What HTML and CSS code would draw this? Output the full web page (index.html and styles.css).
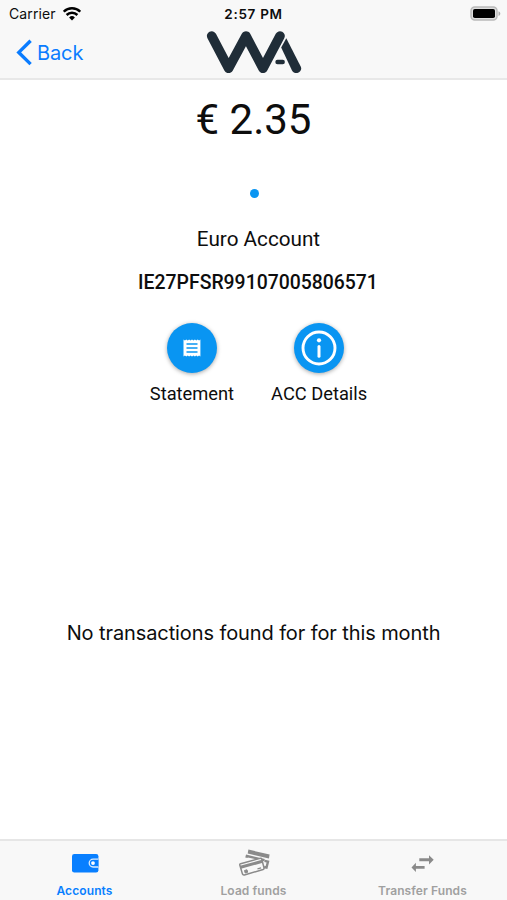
FILE: index.html
```html
<!DOCTYPE html>
<html lang="en">
<head>
  <meta charset="UTF-8">
  <meta name="viewport" content="width=device-width, initial-scale=1">
  <title>Euro Account</title>
  <link rel="stylesheet" href="styles.css">
</head>
<body>

  <header class="header">
    <div class="status-bar">
      <div class="carrier">
        <span>Carrier</span>
        <svg width="18" height="14" viewBox="0 0 18 14" fill="none" stroke="#000" stroke-width="2.5">
          <path d="M.7 4.7a11.8 11.8 0 0 1 16.6 0"/>
          <path d="M3.6 8a7.7 7.7 0 0 1 10.8 0"/>
          <path d="M9 13.5l-2.9-3.1a4.2 4.2 0 0 1 5.8 0z" fill="#000" stroke="none"/>
        </svg>
      </div>
      <div class="time">2:57 PM</div>
      <svg class="battery" width="31" height="16" viewBox="0 0 31 16">
        <rect x="1" y="1" width="26" height="13" rx="3.8" fill="#dedede" stroke="#b9b9b9" stroke-width="1.5"/>
        <rect x="3" y="3" width="22" height="9" rx="1.8" fill="#000"/>
        <path d="M28.5 5.2c2.4 1 2.4 3.7 0 4.7z" fill="#aaa"/>
      </svg>
    </div>
    <nav class="navbar">
      <a class="back">
        <svg width="17" height="27" viewBox="0 0 17 27" fill="none" stroke="#0a7cff" stroke-width="3.4">
          <path d="M14.6 1.7L2.8 13.4l11.8 11.7"/>
        </svg>
        <span>Back</span>
      </a>
      <svg class="logo" width="96" height="44" viewBox="0 0 96 44" fill="none" stroke="#202d38" stroke-width="9.6" stroke-linecap="round" stroke-linejoin="round">
        <path d="M5.7 5L22.6 37.3 40 5 57 37.3 74 5"/>
        <path d="M75.2 16.6L80.3 7.2 94.7 35.4c2.6 5.4-5.6 9.4-8.7 4z" fill="#202d38" stroke="none"/>
        <path d="M71.5 31h5.2" stroke-width="4.4"/>
      </svg>
    </nav>
  </header>

  <main class="content">
    <h1 class="balance">€ 2.35</h1>
    <div class="dot"></div>
    <p class="account-name">Euro Account</p>
    <p class="iban">IE27PFSR99107005806571</p>

    <div class="actions">
      <div class="action">
        <div class="circle">
          <svg width="18" height="18" viewBox="0 0 18 18">
            <path fill="#fff" d="M.5.5l1.4 1 1.4-1 1.4 1 1.4-1 1.4 1 1.5-1 1.5 1 1.4-1 1.4 1 1.4-1 1.4 1 1.3-1v17l-1.3-1-1.4 1-1.4-1-1.4 1-1.4-1-1.5 1-1.5-1-1.4 1-1.4-1-1.4 1-1.4-1-1.4 1z"/>
            <path stroke="#0995f2" stroke-width="1.6" d="M3.5 5h11M3.5 9h11M3.5 13h11"/>
          </svg>
        </div>
        <span>Statement</span>
      </div>
      <div class="action">
        <div class="circle">
          <svg width="36" height="36" viewBox="0 0 36 36">
            <circle cx="18" cy="18" r="16" fill="none" stroke="#fff" stroke-width="2.9"/>
            <circle cx="18" cy="10.3" r="2.1" fill="#fff"/>
            <path d="M18 16.5v9.8" stroke="#fff" stroke-width="3" stroke-linecap="round"/>
          </svg>
        </div>
        <span>ACC Details</span>
      </div>
    </div>

    <p class="empty">No transactions found for for this month</p>
  </main>

  <footer class="tabs">
    <a class="tab active">
      <svg width="34" height="32" viewBox="0 0 34 32">
        <rect x="4" y="6" width="26.4" height="18.6" rx="2.3" fill="#087fff"/>
        <path d="M30.4 11.2h-5.3a3.9 3.9 0 0 0 0 7.8h5.3" fill="#087fff" stroke="#d9ecff" stroke-width="1.3"/>
        <circle cx="25" cy="15.1" r="1.9" fill="#fff"/>
      </svg>
      <span>Accounts</span>
    </a>
    <a class="tab">
      <svg width="34" height="32" viewBox="0 0 34 32">
        <path d="M11.4 1.6l21.2 4.9-.7 4-21.2-4.9z" fill="#8a8a8a"/>
        <path d="M9.4 9.8l.5-1.8 17.6 4.1M27.6 12.9l3.4.8-1.5 5.9-2.4-.6" fill="none" stroke="#8a8a8a" stroke-width="2.4"/>
        <path d="M3.6 15.7L23.2 10.4q1.2-.3 1.6.9l2.2 8.6q.3 1.2-.9 1.6L7.4 27q-1.5.3-1.9-.9L2.8 17q-.2-1 .8-1.3z" fill="#f8f8f8" stroke="#8a8a8a" stroke-width="1.5"/>
        <path d="M3.5 19.2l22-5.9" stroke="#8a8a8a" stroke-width="3"/>
        <path d="M7.5 22.5l2.5-.7.7 2.5-2.5.7z" fill="#8a8a8a" stroke="#8a8a8a"/>
        <path d="M20.5 20.8l3.6-1" stroke="#8a8a8a" stroke-width="1.2"/>
      </svg>
      <span>Load funds</span>
    </a>
    <a class="tab">
      <svg width="34" height="32" viewBox="0 0 34 32" fill="#8a8a8a">
        <path d="M13.3 10.3h9.7V7.2l4.7 4.6-4.7 4.6v-3.2h-9.7z"/>
        <path d="M18.6 17.9h-8.7v-3.1l-4.4 4.6 4.4 4.6v-3.2h8.7z"/>
      </svg>
      <span>Transfer Funds</span>
    </a>
  </footer>

</body>
</html>
```

FILE: styles.css
```css
* {
  box-sizing: border-box;
}
body {
  margin: 0;
  height: 900px;
  display: flex;
  flex-direction: column;
  background: #fff;
  color: #0d0d0d;
  font-family: Roboto, sans-serif;
  overflow: hidden;
}
h1, p {
  margin: 0;
}
svg {
  display: block;
}

.header {
  height: 80px;
  background: #f8f8f8;
  border-bottom: 2px solid #e8e8e8;
  font-family: Inter, sans-serif;
}
.status-bar {
  height: 27px;
  padding: 0 6px 0 9px;
  display: grid;
  grid-template-columns: 1fr auto 1fr;
  align-items: center;
  font-size: 14px;
}
.carrier {
  display: flex;
  align-items: center;
  gap: 7px;
  letter-spacing: 0.1px;
}
.time {
  padding-right: 3px;
  font-weight: 600;
  font-size: 13.5px;
  letter-spacing: 0.7px;
}
.battery {
  justify-self: end;
}
.navbar {
  height: 51px;
  display: grid;
  grid-template-columns: 1fr auto 1fr;
  align-items: center;
  padding: 0 16px;
}
.back {
  display: flex;
  align-items: center;
  gap: 4px;
  color: #0a7cff;
  font-size: 20px;
  letter-spacing: -0.1px;
}

.content {
  flex: 1;
  display: flex;
  flex-direction: column;
  align-items: center;
}
.balance {
  margin-top: 15px;
  font-size: 42px;
  line-height: 50px;
  font-weight: 400;
}
.dot {
  width: 9px;
  height: 9px;
  margin: 44px 0 0 2px;
  border-radius: 50%;
  background: #0995f2;
}
.account-name {
  margin-top: 29px;
  padding-left: 10px;
  font-size: 20.7px;
  line-height: 24px;
}
.iban {
  margin-top: 20px;
  padding-left: 9px;
  font-size: 19.4px;
  line-height: 24px;
  font-weight: 500;
}
.actions {
  display: flex;
  gap: 37px;
  margin-top: 28px;
  padding-left: 10px;
}
.action {
  display: flex;
  flex-direction: column;
  align-items: center;
  gap: 10px;
  font-size: 18.3px;
  line-height: 22px;
}
.circle {
  width: 50px;
  height: 50px;
  display: flex;
  align-items: center;
  justify-content: center;
  border-radius: 50%;
  background: #0995f2;
  box-shadow: 0 1px 4px rgba(0, 0, 0, 0.35);
}
.empty {
  margin-top: 216px;
  font-family: Inter, sans-serif;
  font-size: 20px;
  line-height: 24px;
  letter-spacing: -0.1px;
}

.tabs {
  height: 61px;
  display: grid;
  grid-template-columns: repeat(3, 1fr);
  background: #f8f8f8;
  border-top: 2px solid #e6e6e6;
  font-family: Inter, sans-serif;
  font-size: 12px;
  font-weight: 600;
  letter-spacing: 0.1px;
}
.tab {
  display: flex;
  flex-direction: column;
  align-items: center;
  padding-top: 7px;
  color: #a0a0a0;
}
.tab span {
  margin-top: 3px;
  line-height: 15px;
}
.tab.active {
  color: #087fff;
}
```
